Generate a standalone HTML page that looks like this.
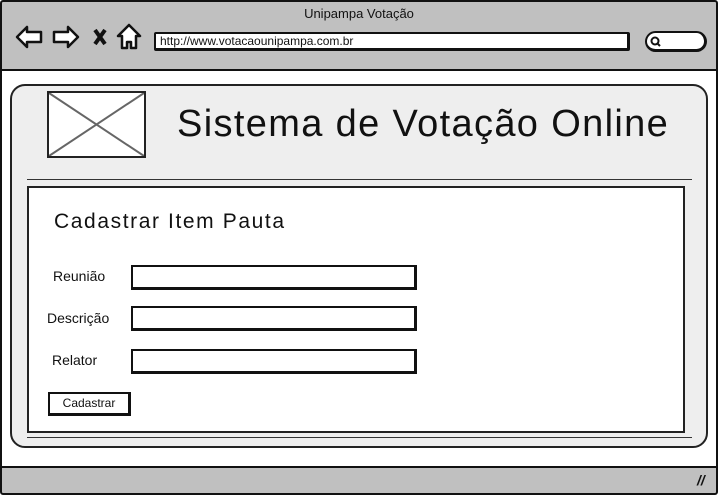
<!DOCTYPE html>
<html><head><style>
*{margin:0;padding:0;box-sizing:border-box}
body{width:718px;height:495px;background:#fff;font-family:"Liberation Sans",sans-serif;position:relative;overflow:hidden}
.a{position:absolute}
.frame{left:0;top:0;width:718px;height:495px;border:2px solid #111;border-radius:3px}
.top{left:2px;top:2px;width:714px;height:69px;background:#c0c0c0;border-bottom:2px solid #111}
.bot{left:2px;top:466px;width:714px;height:27px;background:#c0c0c0;border-top:2px solid #111}
.inp{background:#fff;border:2px solid #111;border-right-width:3px;border-bottom-width:3px}
</style></head><body>
<div class="a top"></div>
<div class="a bot"></div>
<div class="a frame"></div>
<div class="a" style="left:0;top:6px;width:718px;text-align:center;font-size:13px;color:#111">Unipampa Votação</div>
<svg class="a" style="left:14px;top:22px" width="130" height="30" viewBox="0 0 130 30">
<g fill="#fff" stroke="#111" stroke-width="2.5" stroke-linejoin="round">
<path d="M3 15 L13 5 L13 10 L27 10 L27 20 L13 20 L13 25 Z"/>
<path d="M64 15 L54 5 L54 10 L40 10 L40 20 L54 20 L54 25 Z"/>
<path d="M104 14 L115 3 L126 14 L122 14 L122 26 L117 26 L117 20 L113 20 L113 26 L108 26 L108 14 Z"/>
</g>
<path d="M81 8 L91 22 M91 8 L81 22" stroke="#111" stroke-width="4"/>
</svg>
<div class="a inp" style="left:154px;top:32px;width:476px;height:19px;border-radius:2px;font-size:12px;padding-left:4px;line-height:14px;color:#111">http://www.votacaounipampa.com.br</div>
<div class="a inp" style="left:645px;top:31px;width:62px;height:21px;border-radius:11px"></div>
<svg class="a" style="left:650px;top:36px" width="12" height="12"><circle cx="5" cy="5" r="3.5" fill="none" stroke="#111" stroke-width="2"/><path d="M7 7 L10 10" stroke="#111" stroke-width="2"/></svg>
<div class="a" style="left:10px;top:84px;width:698px;height:364px;background:#eee;border:2px solid #222;border-radius:15px"></div>
<div class="a" style="left:47px;top:91px;width:99px;height:67px;background:#fff;border:2px solid #222"></div>
<svg class="a" style="left:49px;top:93px" width="95" height="63"><path d="M0 0 L95 63 M95 0 L0 63" stroke="#666" stroke-width="2"/></svg>
<div class="a" style="left:177px;top:103px;font-size:38px;letter-spacing:1.35px;color:#111;white-space:nowrap">Sistema de Votação Online</div>
<div class="a" style="left:27px;top:179px;width:665px;height:1px;background:#333"></div>
<div class="a" style="left:27px;top:186px;width:658px;height:247px;background:#fff;border:2px solid #222"></div>
<div class="a" style="left:27px;top:437px;width:665px;height:1px;background:#333"></div>
<div class="a" style="left:54px;top:210px;font-size:21px;letter-spacing:1.6px;color:#111">Cadastrar Item Pauta</div>
<div class="a" style="left:53px;top:268px;font-size:14px;color:#111">Reunião</div>
<div class="a" style="left:47px;top:310px;font-size:14px;color:#111">Descrição</div>
<div class="a" style="left:52px;top:352px;font-size:14px;color:#111">Relator</div>
<div class="a inp" style="left:131px;top:265px;width:286px;height:25px"></div>
<div class="a inp" style="left:131px;top:306px;width:286px;height:25px"></div>
<div class="a inp" style="left:131px;top:349px;width:286px;height:25px"></div>
<div class="a inp" style="left:48px;top:392px;width:83px;height:24px;font-size:12px;text-align:center;line-height:18px;color:#111">Cadastrar</div>
<div class="a" style="left:697px;top:472px;font-size:14px;font-weight:bold;font-style:italic;color:#111">//</div>
</body></html>
